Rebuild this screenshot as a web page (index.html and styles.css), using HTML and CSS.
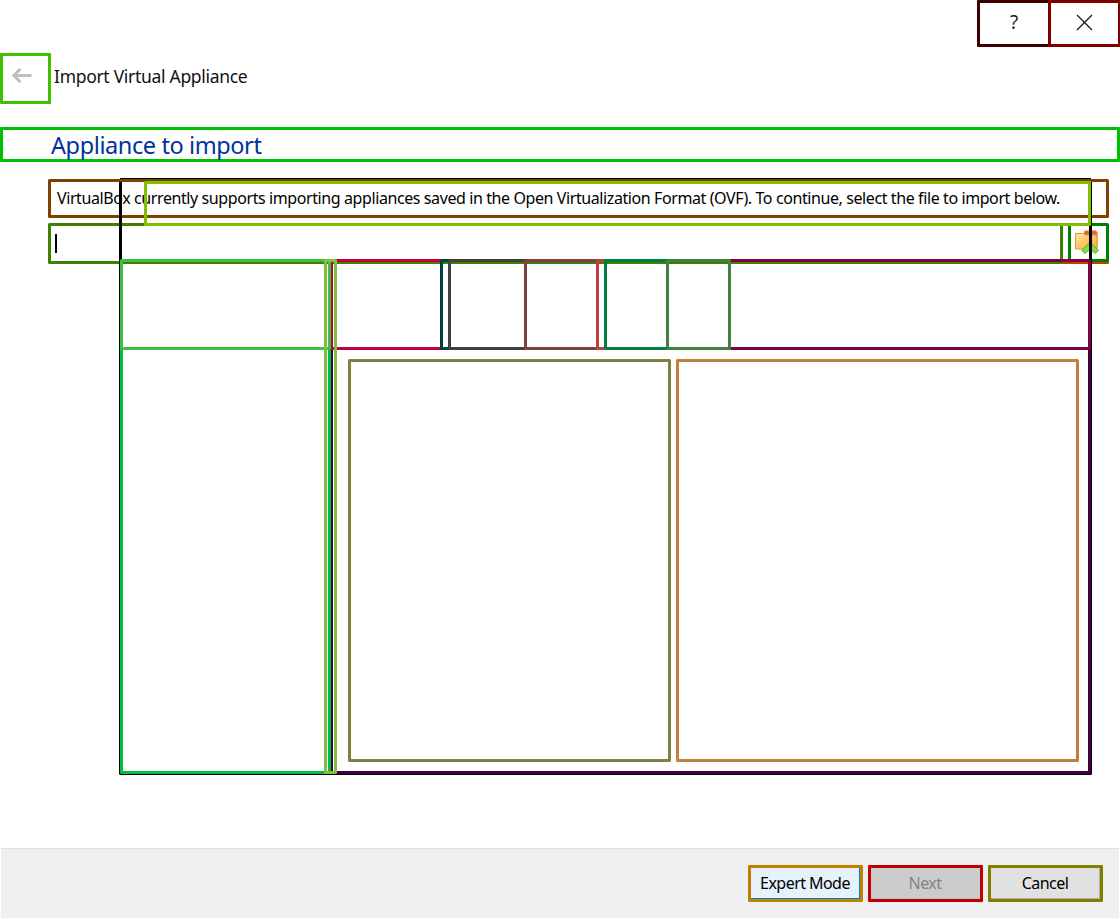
FILE: index.html
```html
<!DOCTYPE html>
<html lang="en">
<head>
<meta charset="utf-8">
<title>Import Virtual Appliance</title>
<link rel="stylesheet" href="styles.css">
</head>
<body>
<main class="dialog">
  <header class="window-bar">
    <button class="window-button help" aria-label="Help"><span>?</span></button>
    <button class="window-button close" aria-label="Close">
      <svg width="17" height="17" viewBox="0 0 17 17"><path d="M1 1 16 16M16 1 1 16" stroke="#111" stroke-width="1.2" fill="none"/></svg>
    </button>
  </header>
  <div class="wizard-bar">
    <button class="back" aria-label="Back">
      <svg width="20" height="16" viewBox="0 0 20 16"><path d="M19.500 7.500H2M8.500 0.800 1.800 7.500 8.500 14.200" stroke="#bfbfbf" stroke-width="3" fill="none"/></svg>
    </button>
    <span class="wizard-name">Import Virtual Appliance</span>
  </div>
  <h1 class="page-title"><span>Appliance to import</span></h1>
  <section class="content">
    <p class="description"><span>VirtualBox currently supports importing appliances saved in the Open Virtualization Format (OVF). To continue, select the file to import below.</span></p>
    <div class="file-row">
      <div class="file-input"><span class="caret"></span></div>
      <button class="browse" aria-label="Choose file">
        <svg width="26" height="26" viewBox="0 0 26 26">
          <defs><linearGradient id="folder" x2="1" y2="1"><stop stop-color="#ffe79c"/><stop offset="1" stop-color="#fba832"/></linearGradient></defs>
          <path d="M10 6V2l1-1.500h11l1.500 2V17H10z" fill="#e9662b"/>
          <path d="M1.500 3.500h8l2 1.500H23v14H1.500z" fill="url(#folder)" stroke="#df9640"/>
          <path d="M16 12 24.500 20.500l-3.500 3-5-4.500-5 4.500-3.500-3z" fill="#86dc45" stroke="#59b52b"/>
        </svg>
      </button>
    </div>
  </section>
  <footer class="actions">
    <button class="action expert">Expert Mode</button>
    <button class="action next" disabled>Next</button>
    <button class="action cancel">Cancel</button>
  </footer>
</main>
<svg class="region-layer" width="1120" height="919" viewBox="0 0 1120 919" aria-hidden="true">
  <path d="M1062 262.500H1107.500V250" stroke="#c04000"/>
  <rect x="49.500" y="224.500" width="1012" height="38" stroke="#408000"/>
  <rect x="1069.500" y="224.500" width="38" height="36" stroke="#008000"/>
  <rect x="49.500" y="180.500" width="1058" height="36" stroke="#804000"/>
  <path d="M120.500 182V773.500H1090.500V182" stroke="#000"/>
  <path d="M120 178.500H1091" stroke="#000" stroke-width="1"/>
  <rect x="145.500" y="182.500" width="944" height="42" stroke="#80c000"/>
  <rect x="331.500" y="348.500" width="758" height="424" stroke="#400040"/>
  <rect x="121.500" y="348.500" width="208" height="424" stroke="#00c040"/>
  <rect x="331.500" y="260.500" width="758" height="88" stroke="#800040"/>
  <rect x="331.500" y="260.500" width="110" height="88" stroke="#c00040"/>
  <rect x="121.500" y="260.500" width="208" height="88" stroke="#40c040"/>
  <rect x="441.500" y="260.500" width="8" height="88" stroke="#004040"/>
  <rect x="449.500" y="260.500" width="76" height="88" stroke="#404040"/>
  <rect x="525.500" y="260.500" width="72" height="88" stroke="#804040"/>
  <rect x="597.500" y="260.500" width="8" height="88" stroke="#c04040"/>
  <rect x="605.500" y="260.500" width="62" height="88" stroke="#008040"/>
  <rect x="667.500" y="260.500" width="62" height="88" stroke="#408040"/>
  <rect x="325.500" y="260.500" width="10" height="512" stroke="#80c040"/>
  <rect x="349.500" y="360.500" width="320" height="400" stroke="#808040"/>
  <rect x="677.500" y="360.500" width="400" height="400" stroke="#c08040"/>
</svg>
</body>
</html>
```

FILE: styles.css
```css
* { box-sizing: border-box; }
body { margin: 0; background: #fff; overflow: hidden; }
button { padding: 0; margin: 0; background: none; font: inherit; }
.dialog {
  display: flex;
  flex-direction: column;
  width: 1120px;
  height: 918px;
  color: #000;
  font: 16px "Noto Sans", sans-serif;
}
.window-bar { display: flex; justify-content: flex-end; height: 47px; }
.window-button {
  display: flex;
  align-items: center;
  justify-content: center;
  height: 47px;
  padding-bottom: 2px;
  border: 3px solid #400000;
  border-radius: 1px;
}
.help { width: 74px; margin-right: -3px; padding-bottom: 3px; font-size: 19px; color: #222; }
.close { width: 73px; margin-right: -1px; border-color: #800000; }
.wizard-bar { display: flex; height: 51px; margin-top: 6px; }
.back {
  width: 51px;
  height: 51px;
  padding: 12px 0 0 9px;
  border: 3px solid #40c000;
  border-radius: 1px;
  display: flex;
}
.wizard-name { padding-left: 3px; color: #111; font-size: 17.5px; letter-spacing: -0.3px; line-height: 46px; white-space: nowrap; }
.page-title {
  height: 35px;
  margin: 23px 0 0;
  padding-left: 48px;
  border: 3px solid #00c000;
  border-radius: 1px;
  color: #003399;
  font-size: 23.5px;
  letter-spacing: -0.4px;
  font-weight: 400;
  line-height: 30px;
  white-space: nowrap;
}
.content { padding: 17px 11px 0 48px; }
.description { height: 39px; margin: 0; padding-left: 9px; line-height: 38px; white-space: nowrap; font-size: 16px; letter-spacing: -0.405px; }
.file-row { display: flex; justify-content: space-between; height: 41px; margin-top: 5px; }
.file-input { width: 1015px; padding: 11px 0 0 7px; }
.caret { display: block; width: 2px; height: 19px; background: #000; }
.browse { display: flex; width: 41px; height: 39px; padding: 7px 0 0 6px; border: 0; }
.actions {
  display: flex;
  justify-content: flex-end;
  gap: 5px;
  height: 70px;
  margin: auto 1px 0;
  padding: 16px 16px 0 0;
  border-top: 1px solid #dfdfdf;
  background: #f0f0f0;
}
.action {
  width: 115px;
  height: 37px;
  padding: 0 1px 0 0;
  border: 3px solid #c08000;
  border-radius: 1px;
  font-size: 16px;
  letter-spacing: -0.55px;
  line-height: 29px;
}
.expert { background: #e5f1fb; box-shadow: inset -1px -1px #0078d7; color: #000; }
.next { border-color: #c00000; background: #ccc; box-shadow: inset 0 -1px #bfbfbf; color: #838383; }
.cancel { border-color: #808000; background: #e1e1e1; box-shadow: inset -1px -1px #adadad; color: #000; }
.region-layer { position: absolute; inset: 0; fill: none; stroke-width: 3px; stroke-linejoin: round; pointer-events: none; }
```
